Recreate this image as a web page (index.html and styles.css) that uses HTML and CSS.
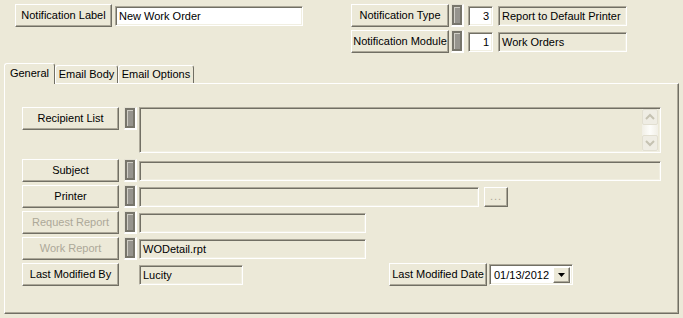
FILE: index.html
```html
<!DOCTYPE html>
<html lang="en">
<head>
    <meta charset="UTF-8">
    <title>Notification</title>
    <link rel="stylesheet" href="styles.css">
</head>
<body>
    <div class="header">
        <div class="label-group">
            <div class="btn btn-label">Notification Label</div>
            <div class="field field-white label-field">New Work Order</div>
        </div>
        <div class="lookup-group">
            <div class="lookup-row">
                <div class="btn btn-lookup">Notification Type</div>
                <span class="lock lock-top"><span></span></span>
                <div class="field field-white num">3</div>
                <div class="field desc">Report to Default Printer</div>
            </div>
            <div class="lookup-row">
                <div class="btn btn-lookup">Notification Module</div>
                <span class="lock lock-top"><span></span></span>
                <div class="field field-white num">1</div>
                <div class="field desc">Work Orders</div>
            </div>
        </div>
    </div>

    <div class="tabs">
        <div class="tab tab-general active">General</div>
        <div class="tab tab-body">Email Body</div>
        <div class="tab tab-options">Email Options</div>
    </div>

    <div class="panel">
        <div class="row row-tall">
            <div class="btn">Recipient List</div>
            <span class="lock"><span></span></span>
            <div class="field field-area">
                <div class="scroll">
                    <div class="scroll-btn">
                        <svg width="14" height="14" viewBox="0 0 14 14"><polyline points="3,9 7,5 11,9" fill="none" stroke="#c5c2b2" stroke-width="2"/></svg>
                    </div>
                    <div class="scroll-btn">
                        <svg width="14" height="14" viewBox="0 0 14 14"><polyline points="3,5 7,9 11,5" fill="none" stroke="#c5c2b2" stroke-width="2"/></svg>
                    </div>
                </div>
            </div>
        </div>
        <div class="row row-subject">
            <div class="btn">Subject</div>
            <span class="lock"><span></span></span>
            <div class="field field-wide"></div>
        </div>
        <div class="row">
            <div class="btn">Printer</div>
            <span class="lock"><span></span></span>
            <div class="field field-printer"></div>
            <div class="ellipsis">...</div>
        </div>
        <div class="row">
            <div class="btn disabled">Request Report</div>
            <span class="lock"><span></span></span>
            <div class="field field-report"></div>
        </div>
        <div class="row">
            <div class="btn disabled">Work Report</div>
            <span class="lock"><span></span></span>
            <div class="field field-report">WODetail.rpt</div>
        </div>
        <div class="row">
            <div class="btn">Last Modified By</div>
            <div class="field field-user">Lucity</div>
            <div class="btn btn-date">Last Modified Date</div>
            <div class="field field-white date-field">
                <span>01/13/2012</span>
                <span class="drop">
                    <svg width="7" height="4" viewBox="0 0 7 4"><polygon points="0,0 7,0 3.5,4" fill="#000"/></svg>
                </span>
            </div>
        </div>
    </div>
</body>
</html>
```

FILE: styles.css
```css
body {
    margin: 0;
    width: 683px;
    height: 318px;
    overflow: hidden;
    background: #ece9d8;
    font-family: "Liberation Sans", Arial, sans-serif;
    font-size: 11px;
    color: #000;
}
.header {
    display: flex;
    height: 63px;
    padding: 4px 0 0 15px;
    box-sizing: border-box;
}
.label-group {
    display: flex;
    align-items: flex-start;
    gap: 3px;
}
.lookup-group {
    margin-left: 48px;
    display: flex;
    flex-direction: column;
    gap: 3px;
}
.lookup-row {
    display: flex;
    align-items: flex-start;
    height: 23px;
}

/* raised button */
.btn {
    width: 97px;
    height: 23px;
    box-sizing: border-box;
    border: 1px solid;
    border-color: #fff #716f64 #716f64 #fff;
    box-shadow: inset -1px -1px #aca899;
    background: #ece9d8;
    text-align: center;
    line-height: 20px;
    white-space: nowrap;
    flex-shrink: 0;
}
.btn.disabled {
    color: #aca899;
}
.btn-lookup { width: 98px; }
.btn-date {
    width: 98px;
    margin-left: 146px;
}

/* sunken field */
.field {
    height: 20px;
    margin-top: 2px;
    box-sizing: border-box;
    border: 1px solid;
    border-color: #aca899 #fff #fff #aca899;
    box-shadow: inset 1px 1px #716f64, inset -1px -1px #f1efe2;
    background: #ece9d8;
    padding: 0 3px;
    line-height: 18px;
    white-space: nowrap;
    overflow: hidden;
    flex-shrink: 0;
}
.field-white { background: #fff; }
.label-field {
    width: 188px;
    margin-top: 2px;
}
.num {
    width: 25px;
    margin-left: 4px;
    text-align: right;
}
.desc {
    width: 129px;
    margin-left: 5px;
}

/* lock indicator */
.lock {
    width: 13px;
    height: 23px;
    box-sizing: border-box;
    border-style: solid;
    border-width: 1px 2px 2px 1px;
    border-color: #e4e1d3 #fff #fff #e4e1d3;
    margin-left: 5px;
    flex-shrink: 0;
}
.lock-top { margin-left: 2px; }
.lock span {
    display: block;
    height: 100%;
    box-sizing: border-box;
    border: 2px solid #77756b;
    background: #96948e;
    box-shadow: inset 1px 1px #cfcdc5;
}

/* tabs */
.tabs {
    display: flex;
    align-items: flex-end;
    height: 20px;
    padding-left: 4px;
}
.tab {
    height: 18px;
    box-sizing: border-box;
    border: 1px solid;
    border-color: #fff #716f64 transparent #fff;
    border-bottom: none;
    border-radius: 3px 3px 0 0;
    text-align: center;
    line-height: 17px;
    background: #ece9d8;
}
.tab.active {
    height: 21px;
    margin-bottom: -1px;
    position: relative;
    z-index: 1;
    line-height: 18px;
}
.tab-general { width: 51px; }
.tab-body { width: 63px; }
.tab-options { width: 76px; }

.panel {
    margin-left: 4px;
    width: 675px;
    height: 231px;
    box-sizing: border-box;
    border: 1px solid;
    border-color: #fff #716f64 #716f64 #fff;
    box-shadow: inset -1px -1px #aca899;
    padding: 23px 0 0 17px;
}
.row {
    display: flex;
    align-items: flex-start;
    height: 23px;
    margin-top: 3px;
}
.row-tall {
    height: 46px;
    margin-top: 0;
}
.row-subject { margin-top: 6px; }
.row .field { margin-left: 2px; }

.field-area {
    width: 522px;
    height: 46px;
    margin-top: 0;
    padding: 1px 2px;
    display: flex;
}
.scroll {
    margin-left: auto;
    width: 16px;
    display: flex;
    flex-direction: column;
    justify-content: space-between;
    background: linear-gradient(to right, #f1efe6, #fdfdfa, #f1efe6);
}
.scroll-btn {
    width: 16px;
    height: 16px;
    box-sizing: border-box;
    border: 1px solid #e2dfd1;
    border-radius: 2px;
    background: #efede4;
    display: flex;
    align-items: center;
    justify-content: center;
}
.field-wide { width: 522px; }
.field-printer { width: 340px; }
.field-report { width: 227px; }
.row .field-user {
    width: 104px;
    margin-left: 20px;
}
.ellipsis {
    width: 24px;
    height: 20px;
    margin: 2px 0 0 5px;
    box-sizing: border-box;
    border: 1px solid;
    border-color: #fff #716f64 #716f64 #fff;
    box-shadow: inset -1px -1px #aca899;
    color: #aca899;
    text-align: center;
    line-height: 16px;
    letter-spacing: 1px;
}
.row .date-field {
    width: 84px;
    height: 21px;
    margin-top: 1px;
    display: flex;
    align-items: center;
    justify-content: space-between;
    padding: 0 2px 0 4px;
    background: #fff;
}
.drop {
    width: 17px;
    height: 16px;
    box-sizing: border-box;
    border: 1px solid;
    border-color: #fff #716f64 #716f64 #fff;
    box-shadow: inset -1px -1px #aca899;
    background: #ece9d8;
    display: flex;
    align-items: center;
    justify-content: center;
}
```
